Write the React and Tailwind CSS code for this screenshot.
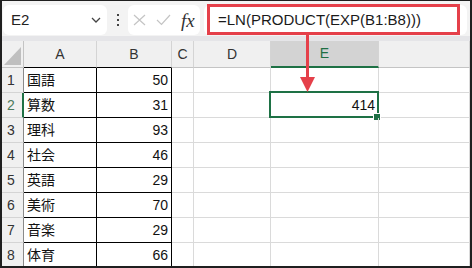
const rows = [
  ["国語", 50],
  ["算数", 31],
  ["理科", 93],
  ["社会", 46],
  ["英語", 29],
  ["美術", 70],
  ["音楽", 29],
  ["体育", 66],
];

const font = "font-['Liberation_Sans','Noto_Sans_CJK_JP',sans-serif]";

function ColHeader({ label, w, active, dark }) {
  return (
    <div
      className={`${w} h-full flex items-center justify-center border-r border-r-[#d4d4d4] text-[14px] ${
        active
          ? "bg-[#d3d3d3] text-[#1e6e42] border-b-2 border-b-[#1e7145]"
          : dark
          ? "bg-[#f0f0f0] text-[#333] border-b border-b-black"
          : "bg-[#f0f0f0] text-[#333] border-b border-b-[#c4c4c4]"
      }`}
    >
      {label}
    </div>
  );
}

function Row({ n, name, value }) {
  const sel = n === 2;
  return (
    <div className="flex h-[25px] shrink-0">
      <div
        className={`w-[22px] h-full flex items-center pl-[5px] text-[14px] bg-[#f0f0f0] border-b border-b-[#d4d4d4] ${
          sel
            ? "text-[#4c7a5c] border-r-2 border-r-[#1e7145]"
            : "text-[#333] border-r border-r-[#8a8a8a]"
        }`}
      >
        {n}
      </div>
      <div className="w-[73px] h-full flex items-center pl-[3px] text-[14px] text-[#111] border-r border-b border-black">
        {name}
      </div>
      <div className="w-[75px] h-full flex items-center justify-end pr-[3px] text-[14px] text-[#111] border-r border-b border-black">
        {value}
      </div>
      <div className="w-[22px] h-full border-r border-b border-[#dadada]" />
      <div className="w-[77px] h-full border-r border-b border-[#dadada]" />
      <div className="w-[108px] h-full relative flex items-center justify-end pr-[3px] text-[14px] text-[#111] border-r border-b border-[#dadada]">
        {sel && (
          <>
            414
            <div className="absolute -left-[2px] -top-[2px] -right-[1px] -bottom-[1px] border-2 border-[#1e7145]" />
            <div className="absolute -right-[2px] -bottom-[3px] w-[6px] h-[6px] bg-[#1e7145] outline outline-1 outline-white" />
          </>
        )}
      </div>
      <div className="w-[91px] h-full border-r border-b border-[#dadada]" />
    </div>
  );
}

export default function App() {
  return (
    <div
      className={`relative w-[472px] h-[268px] overflow-hidden bg-white border-[#1f1f1f] border-t border-l-2 border-r-2 border-b-2 flex flex-col ${font}`}
    >
      {/* formula bar */}
      <div className="flex h-[35px] shrink-0 items-start pt-[4px] pl-[1px] bg-[#f3f3f3]">
        <div className="w-[104px] h-[30px] rounded-md bg-white flex items-center justify-between pl-[8px] pr-[6px]">
          <span className="text-[15px] text-[#222]">E2</span>
          <svg width="10" height="6" viewBox="0 0 10 6">
            <polyline points="1,1 5,5 9,1" fill="none" stroke="#444" strokeWidth="1.3" />
          </svg>
        </div>
        <div className="w-[21px] h-[30px] flex flex-col items-center justify-center gap-[3px]">
          <span className="w-[2px] h-[2px] bg-[#444]" />
          <span className="w-[2px] h-[2px] bg-[#444]" />
          <span className="w-[2px] h-[2px] bg-[#444]" />
        </div>
        <div className="w-[72px] h-[30px] rounded-md bg-white flex items-center pl-[5px]">
          <svg width="13" height="12" viewBox="0 0 13 12">
            <path d="M1 1 L12 11 M12 1 L1 11" stroke="#c4c4c4" strokeWidth="1.2" fill="none" />
          </svg>
          <svg className="ml-[10px]" width="15" height="12" viewBox="0 0 15 12">
            <polyline points="1,6 5.5,10.5 14,1" stroke="#c4c4c4" strokeWidth="1.2" fill="none" />
          </svg>
          <span className="ml-[10px] text-[19px] italic font-['Liberation_Serif',serif] text-[#333] leading-none">
            fx
          </span>
        </div>
        <div className="flex-1 h-[30px] ml-[4px] mr-[3px] rounded-md bg-white flex items-center pl-[14px] text-[15px] text-[#1a1a1a]">
          =LN(PRODUCT(EXP(B1:B8)))
        </div>
      </div>
      <div className="h-[5px] shrink-0 bg-[#e5e5e8]" />

      {/* column headers */}
      <div className="flex h-[27px] shrink-0">
        <div className="w-[22px] h-full bg-[#f0f0f0] border-r border-b border-[#c4c4c4] flex items-end justify-end p-[2px]">
          <svg width="17" height="18" viewBox="0 0 17 18">
            <polygon points="17,0 17,18 0,18" fill="#bfbfbf" />
          </svg>
        </div>
        <ColHeader label="A" w="w-[73px]" dark />
        <ColHeader label="B" w="w-[75px]" dark />
        <ColHeader label="C" w="w-[22px]" />
        <ColHeader label="D" w="w-[77px]" />
        <ColHeader label="E" w="w-[108px]" active />
        <ColHeader label="" w="w-[91px]" />
      </div>

      {rows.map(([name, value], i) => (
        <Row key={i} n={i + 1} name={name} value={value} />
      ))}

      {/* annotation */}
      <div className="absolute left-[205px] top-[3px] w-[253px] h-[31px] border-[3px] border-[#e5404a]" />
      <svg className="absolute left-[297px] top-[33px]" width="17" height="59" viewBox="0 0 17 59">
        <rect x="7" y="0" width="3" height="45" fill="#e5404a" />
        <polygon points="1,43 16,43 8.5,58" fill="#e5404a" />
      </svg>
    </div>
  );
}
